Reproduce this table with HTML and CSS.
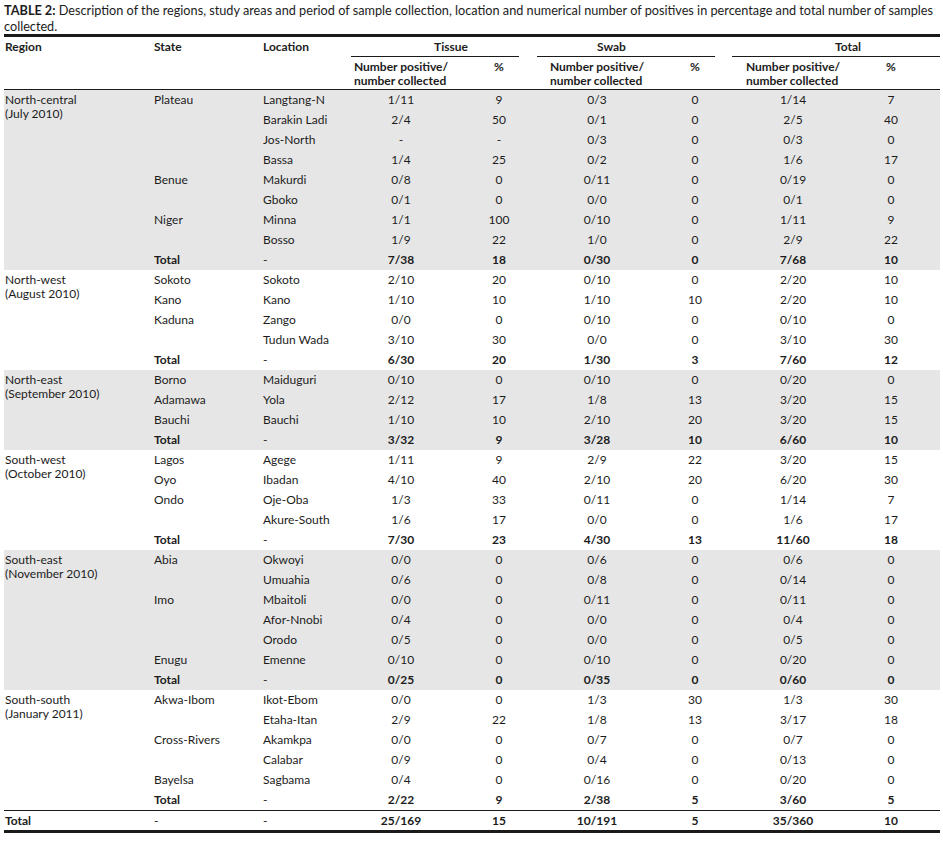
FILE: index.html
```html
<!DOCTYPE html>
<html>
<head>
<meta charset="utf-8">
<link rel="stylesheet" href="styles.css">
</head>
<body>
<div class="caption"><b>TABLE 2:</b> Description of the regions, study areas and period of sample collection, location and numerical number of positives in percentage and total number of samples<br>collected.</div>
<table class="data">
<colgroup>
<col class="w-region"><col class="w-state"><col class="w-loc">
<col class="w-num"><col class="w-num"><col class="w-num"><col class="w-num"><col class="w-num"><col class="w-num">
</colgroup>
<thead>
<tr class="h1">
<th class="txt">Region</th><th class="txt">State</th><th class="txt">Location</th>
<th colspan="2" class="grp"><div class="gline g-tissue">Tissue</div></th>
<th colspan="2" class="grp"><div class="gline g-swab">Swab</div></th>
<th colspan="2" class="grp"><div class="gline g-total">Total</div></th>
</tr>
<tr class="h2">
<th></th><th></th><th></th>
<th class="sub"><span class="np">Number positive/<br>number collected</span></th><th class="sub">%</th>
<th class="sub"><span class="np">Number positive/<br>number collected</span></th><th class="sub">%</th>
<th class="sub"><span class="np">Number positive/<br>number collected</span></th><th class="sub">%</th>
</tr>
</thead>
<tbody class="shade">
<tr><td class="region" rowspan="9">North-central<br>(July 2010)</td><td>Plateau</td><td>Langtang-N</td><td>1/11</td><td>9</td><td>0/3</td><td>0</td><td>1/14</td><td>7</td></tr>
<tr><td></td><td>Barakin Ladi</td><td>2/4</td><td>50</td><td>0/1</td><td>0</td><td>2/5</td><td>40</td></tr>
<tr><td></td><td>Jos-North</td><td>-</td><td>-</td><td>0/3</td><td>0</td><td>0/3</td><td>0</td></tr>
<tr><td></td><td>Bassa</td><td>1/4</td><td>25</td><td>0/2</td><td>0</td><td>1/6</td><td>17</td></tr>
<tr><td>Benue</td><td>Makurdi</td><td>0/8</td><td>0</td><td>0/11</td><td>0</td><td>0/19</td><td>0</td></tr>
<tr><td></td><td>Gboko</td><td>0/1</td><td>0</td><td>0/0</td><td>0</td><td>0/1</td><td>0</td></tr>
<tr><td>Niger</td><td>Minna</td><td>1/1</td><td>100</td><td>0/10</td><td>0</td><td>1/11</td><td>9</td></tr>
<tr><td></td><td>Bosso</td><td>1/9</td><td>22</td><td>1/0</td><td>0</td><td>2/9</td><td>22</td></tr>
<tr class="sum"><td class="b">Total</td><td>-</td><td>7/38</td><td>18</td><td>0/30</td><td>0</td><td>7/68</td><td>10</td></tr>
</tbody>
<tbody>
<tr><td class="region" rowspan="5">North-west<br>(August 2010)</td><td>Sokoto</td><td>Sokoto</td><td>2/10</td><td>20</td><td>0/10</td><td>0</td><td>2/20</td><td>10</td></tr>
<tr><td>Kano</td><td>Kano</td><td>1/10</td><td>10</td><td>1/10</td><td>10</td><td>2/20</td><td>10</td></tr>
<tr><td>Kaduna</td><td>Zango</td><td>0/0</td><td>0</td><td>0/10</td><td>0</td><td>0/10</td><td>0</td></tr>
<tr><td></td><td>Tudun Wada</td><td>3/10</td><td>30</td><td>0/0</td><td>0</td><td>3/10</td><td>30</td></tr>
<tr class="sum"><td class="b">Total</td><td>-</td><td>6/30</td><td>20</td><td>1/30</td><td>3</td><td>7/60</td><td>12</td></tr>
</tbody>
<tbody class="shade">
<tr><td class="region" rowspan="4">North-east<br>(September 2010)</td><td>Borno</td><td>Maiduguri</td><td>0/10</td><td>0</td><td>0/10</td><td>0</td><td>0/20</td><td>0</td></tr>
<tr><td>Adamawa</td><td>Yola</td><td>2/12</td><td>17</td><td>1/8</td><td>13</td><td>3/20</td><td>15</td></tr>
<tr><td>Bauchi</td><td>Bauchi</td><td>1/10</td><td>10</td><td>2/10</td><td>20</td><td>3/20</td><td>15</td></tr>
<tr class="sum"><td class="b">Total</td><td>-</td><td>3/32</td><td>9</td><td>3/28</td><td>10</td><td>6/60</td><td>10</td></tr>
</tbody>
<tbody>
<tr><td class="region" rowspan="5">South-west<br>(October 2010)</td><td>Lagos</td><td>Agege</td><td>1/11</td><td>9</td><td>2/9</td><td>22</td><td>3/20</td><td>15</td></tr>
<tr><td>Oyo</td><td>Ibadan</td><td>4/10</td><td>40</td><td>2/10</td><td>20</td><td>6/20</td><td>30</td></tr>
<tr><td>Ondo</td><td>Oje-Oba</td><td>1/3</td><td>33</td><td>0/11</td><td>0</td><td>1/14</td><td>7</td></tr>
<tr><td></td><td>Akure-South</td><td>1/6</td><td>17</td><td>0/0</td><td>0</td><td>1/6</td><td>17</td></tr>
<tr class="sum"><td class="b">Total</td><td>-</td><td>7/30</td><td>23</td><td>4/30</td><td>13</td><td>11/60</td><td>18</td></tr>
</tbody>
<tbody class="shade">
<tr><td class="region" rowspan="7">South-east<br>(November 2010)</td><td>Abia</td><td>Okwoyi</td><td>0/0</td><td>0</td><td>0/6</td><td>0</td><td>0/6</td><td>0</td></tr>
<tr><td></td><td>Umuahia</td><td>0/6</td><td>0</td><td>0/8</td><td>0</td><td>0/14</td><td>0</td></tr>
<tr><td>Imo</td><td>Mbaitoli</td><td>0/0</td><td>0</td><td>0/11</td><td>0</td><td>0/11</td><td>0</td></tr>
<tr><td></td><td>Afor-Nnobi</td><td>0/4</td><td>0</td><td>0/0</td><td>0</td><td>0/4</td><td>0</td></tr>
<tr><td></td><td>Orodo</td><td>0/5</td><td>0</td><td>0/0</td><td>0</td><td>0/5</td><td>0</td></tr>
<tr><td>Enugu</td><td>Emenne</td><td>0/10</td><td>0</td><td>0/10</td><td>0</td><td>0/20</td><td>0</td></tr>
<tr class="sum"><td class="b">Total</td><td>-</td><td>0/25</td><td>0</td><td>0/35</td><td>0</td><td>0/60</td><td>0</td></tr>
</tbody>
<tbody>
<tr><td class="region" rowspan="6">South-south<br>(January 2011)</td><td>Akwa-Ibom</td><td>Ikot-Ebom</td><td>0/0</td><td>0</td><td>1/3</td><td>30</td><td>1/3</td><td>30</td></tr>
<tr><td></td><td>Etaha-Itan</td><td>2/9</td><td>22</td><td>1/8</td><td>13</td><td>3/17</td><td>18</td></tr>
<tr><td>Cross-Rivers</td><td>Akamkpa</td><td>0/0</td><td>0</td><td>0/7</td><td>0</td><td>0/7</td><td>0</td></tr>
<tr><td></td><td>Calabar</td><td>0/9</td><td>0</td><td>0/4</td><td>0</td><td>0/13</td><td>0</td></tr>
<tr><td>Bayelsa</td><td>Sagbama</td><td>0/4</td><td>0</td><td>0/16</td><td>0</td><td>0/20</td><td>0</td></tr>
<tr class="sum"><td class="b">Total</td><td>-</td><td>2/22</td><td>9</td><td>2/38</td><td>5</td><td>3/60</td><td>5</td></tr>
</tbody>
<tfoot>
<tr class="grand"><td class="b">Total</td><td>-</td><td>-</td><td>25/169</td><td>15</td><td>10/191</td><td>5</td><td>35/360</td><td>10</td></tr>
</tfoot>
</table>
</body>
</html>
```

FILE: styles.css
```css
body {
  margin: 0;
  background: #ffffff;
  color: #1c1c1c;
  font-family: Lato, "Open Sans", "DejaVu Sans", sans-serif;
}

.caption {
  box-sizing: border-box;
  height: 34px;
  padding: 2px 0 0 4px;
  font-size: 12.7px;
  line-height: 16px;
  white-space: nowrap;
}

.caption b {
  font-weight: 700;
}

.data {
  margin-left: 4px;
  width: 936px;
  table-layout: fixed;
  border-collapse: separate;
  border-spacing: 0;
  font-size: 12px;
}

.w-region { width: 149px; }
.w-state { width: 109px; }
.w-loc { width: 90px; }
.w-num { width: 98px; }

.data th,
.data td {
  padding: 0;
  white-space: nowrap;
}

.data th {
  font-weight: 700;
}

/* header row 1 */
.h1 th {
  border-top: 3px solid #1a1a1a;
  height: 20px;
  line-height: 19px;
  text-align: left;
  vertical-align: top;
}

.h1 th.txt {
  padding-left: 1px;
}

.gline {
  border-bottom: 1px solid #1a1a1a;
  line-height: 19px;
  text-align: left;
}

.g-tissue {
  margin: 0 29px 0 -1px;
  padding-left: 83px;
}

.g-swab {
  margin: 0 29px 0 -11px;
  padding-left: 60px;
}

.g-total {
  margin: 0 0 0 -12px;
  padding-left: 103px;
}

/* header row 2 */
.h2 th {
  height: 33px;
  border-bottom: 1px solid #1a1a1a;
  vertical-align: top;
  padding-top: 3px;
  box-sizing: border-box;
  line-height: 14px;
}

.h2 th.sub {
  text-align: center;
}

.np {
  display: inline-block;
  text-align: left;
}

/* body */
.data td {
  height: 20px;
  line-height: 20px;
  text-align: center;
}

.data tbody tr td:nth-last-child(8),
.data tbody tr td:nth-last-child(7),
.data tbody tr td:nth-last-child(9) {
  text-align: left;
  padding-left: 1px;
}

.data td.region {
  vertical-align: top;
  line-height: 14px;
  padding-top: 3px;
  white-space: normal;
  text-align: left;
}

.shade td {
  background: #e6e6e6;
}

.sum td {
  font-weight: 700;
}

.sum td:nth-last-child(7) {
  font-weight: 400;
}

.b {
  font-weight: 700;
}

/* grand total */
.grand td {
  border-top: 1px solid #1a1a1a;
  border-bottom: 3px solid #1a1a1a;
  height: 19px;
  line-height: 19px;
  font-weight: 700;
}

.grand td:nth-child(1) {
  text-align: left;
  padding-left: 1px;
}

.grand td:nth-child(2),
.grand td:nth-child(3) {
  text-align: left;
  padding-left: 1px;
  font-weight: 400;
}
```
